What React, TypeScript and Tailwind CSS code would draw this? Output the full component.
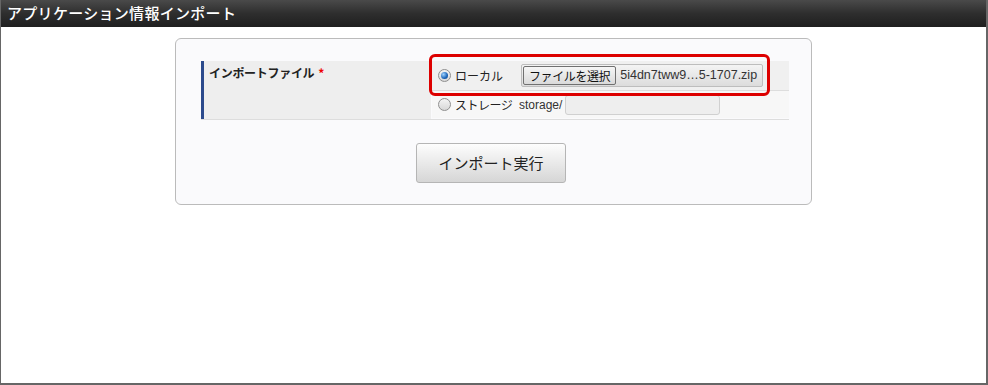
const jp = "font-['Noto_Sans_CJK_JP','Noto_Sans',sans-serif]";

function Radio({ checked }: { checked?: boolean }) {
  return (
    <span className="flex h-[13px] w-[13px] shrink-0 items-center justify-center rounded-full border border-[#8f8f8f] bg-gradient-to-b from-[#f4f4f4] to-[#d8d8d8]">
      {checked && (
        <span className="h-[7px] w-[7px] rounded-full bg-[radial-gradient(circle_at_35%_35%,#9fd3ff,#1a64b8_60%,#0b3f80)]" />
      )}
    </span>
  );
}

export default function App() {
  return (
    <div className={`${jp} h-[385px] w-[988px] whitespace-nowrap border-l border-r-2 border-b-2 border-[#666] bg-white`}>
      <div className="flex h-[27px] items-center bg-gradient-to-b from-[#4a4a4a] via-[#2e2e2e] to-[#1f1f1f] pl-[6px] text-[15px] font-medium tracking-[0.3px] text-white">
        アプリケーション情報インポート
      </div>

      <div className="relative ml-[174px] mt-[11px] h-[167px] w-[637px] rounded-[6px] border border-[#bbb] bg-[#fafafc] pl-[25px] pt-[22px]">
        <div className="flex w-[588px] border-b border-[#ddd]">
          <div className="flex h-[58px] w-[230px] shrink-0 border-l-[3px] border-[#2b4a8c] bg-[#eeeeee] pl-[5px] pt-[3px]">
            <span className="text-[12px] font-bold tracking-[-0.3px] text-[#222]">
              インポートファイル
              <span className="ml-[4px] text-[#e00]">*</span>
            </span>
          </div>
          <div className="ml-px flex flex-1 flex-col">
            <div className="flex h-[30px] items-center border-b border-[#ddd] bg-[#f0f0f0] pl-[6px]">
              <Radio checked />
              <span className="ml-[4px] w-[66px] shrink-0 text-[12px] text-[#222]">ローカル</span>
              <div className="flex h-[23px] w-[242px] shrink-0 items-center overflow-hidden rounded-[2px] border border-[#bdbdbd] bg-gradient-to-b from-[#f4f4f4] to-[#dcdcdc] pl-px">
                <span className="flex h-[19px] shrink-0 items-center rounded-[2px] border border-[#707070] bg-gradient-to-b from-[#f6f6f6] to-[#dadada] px-[5px] text-[12px] tracking-[-0.4px] text-[#111]">
                  ファイルを選択
                </span>
                <span className="ml-[4px] font-['Liberation_Sans',sans-serif] text-[12.5px] text-[#333]">
                  5i4dn7tww9…5-1707.zip
                </span>
              </div>
            </div>
            <div className="flex h-[27px] items-center bg-[#f7f7f7] pl-[6px]">
              <Radio />
              <span className="ml-[4px] w-[64px] shrink-0 text-[12px] tracking-[-0.5px] text-[#222]">ストレージ</span>
              <span className="font-['Liberation_Sans',sans-serif] text-[12px] text-[#333]">storage/</span>
              <span className="ml-[3px] h-[20px] w-[155px] shrink-0 rounded-[3px] border border-[#d0d0d0] bg-[#eeeeee]" />
            </div>
          </div>
        </div>

        <div className="mt-[23px] flex justify-center pr-[30px]">
          <button className="h-[40px] w-[150px] rounded-[3px] border border-[#b5b5b5] bg-gradient-to-b from-[#fdfdfd] to-[#d6d6d6] text-[15px] text-[#222]">
            インポート実行
          </button>
        </div>

        <div className="pointer-events-none absolute left-[253px] top-[15px] h-[42px] w-[341px] rounded-[6px] border-[3px] border-[#dd0000]" />
      </div>
    </div>
  );
}
